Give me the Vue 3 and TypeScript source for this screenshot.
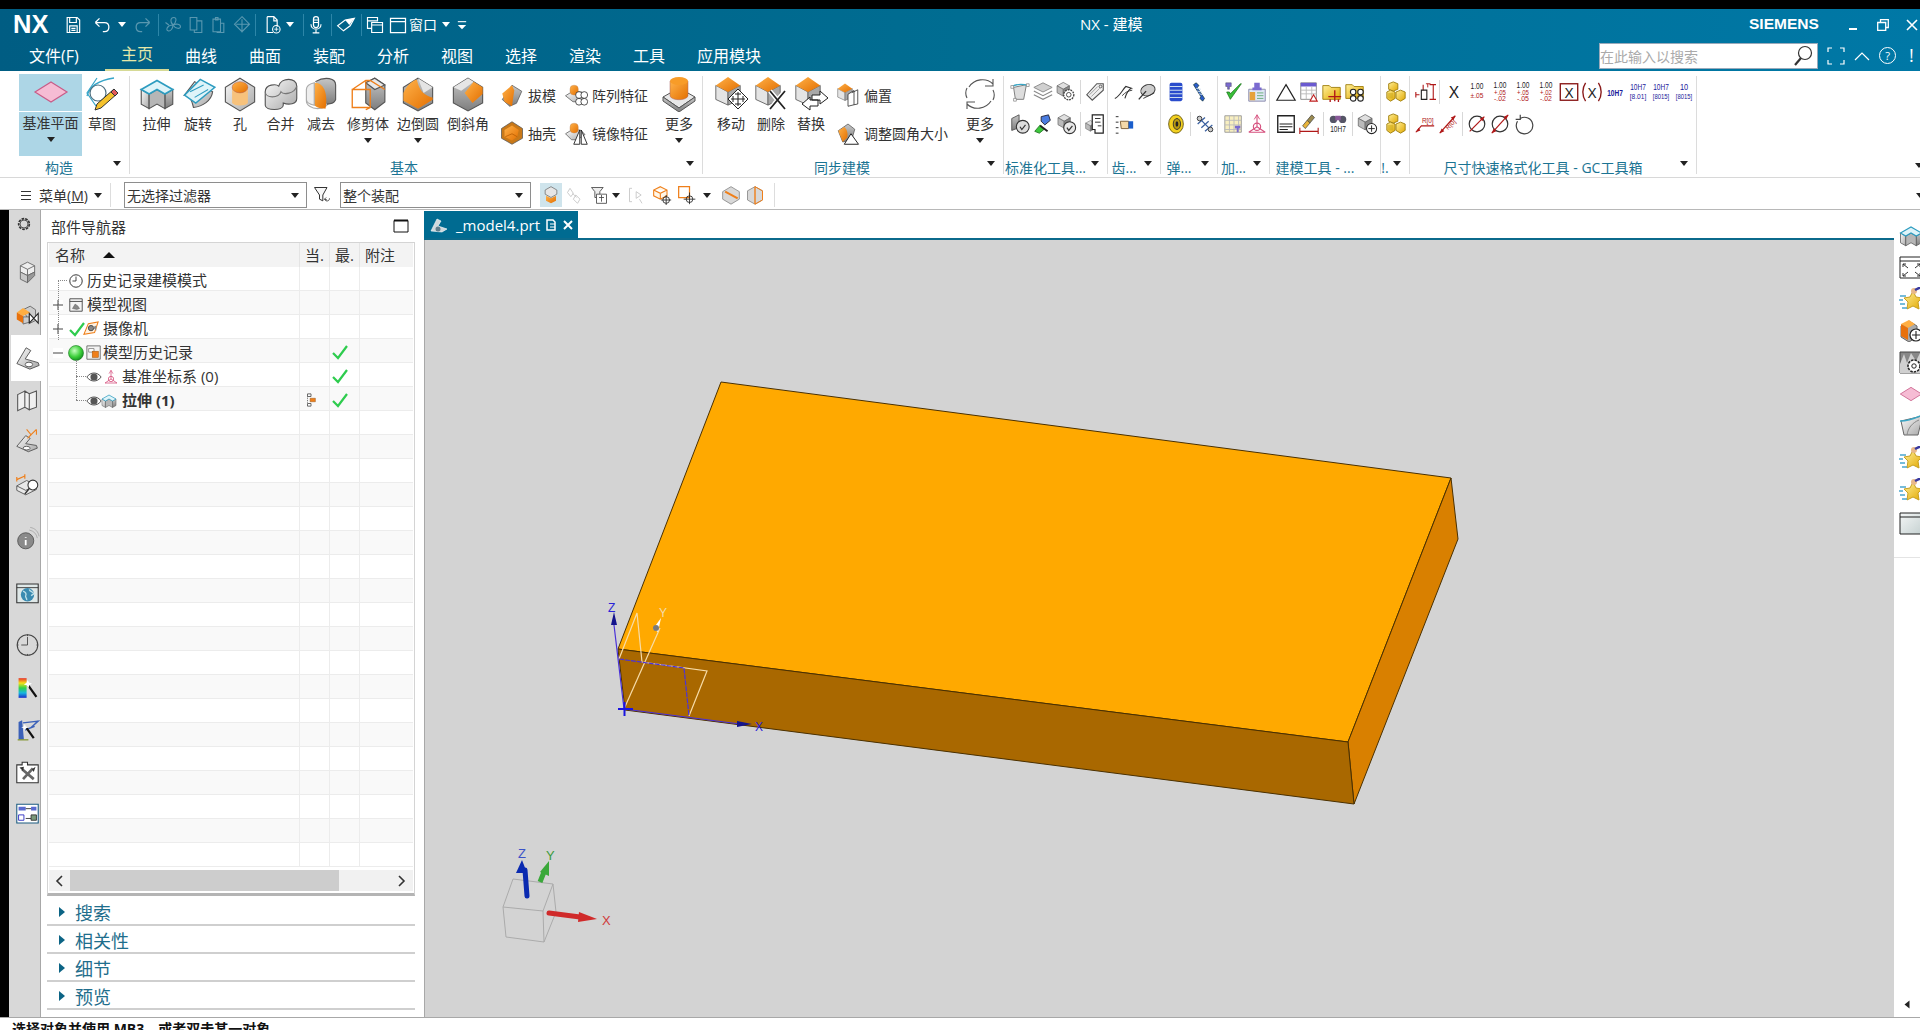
<script setup lang="ts">
interface Item { i?: string; x: number; w?: number; faint?: boolean; caret?: boolean; sep?: boolean; active?: boolean; label?: string }

// turns absolute centre positions into left margins for a flex row
function place(items: Item[], start: number) {
  let end = start;
  return items.map((it) => {
    const w = it.w ?? 22;
    const m = it.x - w / 2 - end;
    end = it.x + w / 2;
    return { ...it, style: { marginLeft: m + 'px', width: w + 'px' } };
  });
}

const qat = place([
  { i: 'save', x: 73 }, { i: 'undo', x: 102 }, { caret: true, x: 122, w: 8 }, { i: 'redo', x: 143, faint: true },
  { sep: true, x: 158, w: 1 }, { i: 'fan', x: 173, faint: true }, { i: 'copy', x: 196, faint: true }, { i: 'paste', x: 218, faint: true },
  { i: 'cross', x: 242, faint: true }, { sep: true, x: 255, w: 1 }, { i: 'newfile', x: 273 }, { caret: true, x: 290, w: 8 },
  { sep: true, x: 303, w: 1 }, { i: 'mic', x: 316 }, { sep: true, x: 331, w: 1 }, { i: 'eraser', x: 346 }, { sep: true, x: 361, w: 1 },
  { i: 'cascade', x: 375 }, { i: 'window', x: 398 }, { label: '窗口', x: 423, w: 28 }, { caret: true, x: 446, w: 8 }, { i: 'more', x: 462, w: 12 }
], 48);

const menus = ['曲线', '曲面', '装配', '分析', '视图', '选择', '渲染', '工具', '应用模块'];

const basicBtns = [
  { i: 'extrude', t: '拉伸', w: 41 }, { i: 'revolve', t: '旋转', w: 42 }, { i: 'hole', t: '孔', w: 42 }, { i: 'unite', t: '合并', w: 39 },
  { i: 'subtract', t: '减去', w: 42 }, { i: 'trim', t: '修剪体', w: 52, caret: true }, { i: 'blend', t: '边倒圆', w: 48, caret: true }, { i: 'chamfer', t: '倒斜角', w: 52 }
];
const syncBtns = [{ i: 'move', t: '移动', w: 40 }, { i: 'del', t: '删除', w: 40 }, { i: 'replace', t: '替换', w: 40 }];

const small: { name: string; w: number; pad: number; cap: string; rows: string[][] }[] = [
  { name: 'std', w: 104, pad: 4, cap: '标准化工具...', rows: [['fitframe', 'layers', 'gearcube', '|', 'tag'], ['wheelcheck', 'bluegreen', 'cubecheck', '|', 'docs']] },
  { name: 'gear', w: 53, pad: 4, cap: '齿...', rows: [['pena', 'penb'], ['handflag']] },
  { name: 'spring', w: 57, pad: 3, cap: '弹...', rows: [['coil', 'spring'], ['ycoil', '|', 'bspring']] },
  { name: 'add', w: 52, pad: 4, cap: '加...', rows: [['vcheck', 'docblue'], ['grid', 'datum']] },
  { name: 'tool', w: 111, pad: 4, cap: '建模工具 - ...', rows: [['tri', 'table', 'folderplus', 'folderlink'], ['doclines', 'brush', '|', 'bino', '|', 'cubeplus']] },
  { name: 'bang', w: 29, pad: 3, cap: '!.', rows: [['cubes'], ['cubes']] },
  { name: 'dim', w: 287, pad: 3, cap: '尺寸快速格式化工具 - GC工具箱', rows: [
    ['dimst', '|', 'xmark', 't1', 't2', 't3', 't4', 'boxx', 'parenx', 'h1', 'h2', 'h3', 'h4'],
    ['rdim', 'slant', '|', 'dia1', 'dia2', 'rot']] }
];

// toolbar icons that carry real text
interface Line { t: string; y: number; size: number; fill: string; len?: number; x?: number; bold?: boolean; rot?: string }
const RED = '#b01818';
const NAVY = '#1a1a9a';
const tol = (a: string, b?: string): Line[] => b
  ? [{ t: '1.00', y: 8, size: 9, fill: '#222', len: 14 }, { t: a, y: 15, size: 7.5, fill: RED, len: 13 }, { t: b, y: 22, size: 7.5, fill: RED, len: 13 }]
  : [{ t: '1.00', y: 9, size: 9, fill: '#222', len: 14 }, { t: a, y: 18, size: 8, fill: RED, len: 14 }];
const fit = (top: string, bot: string): Line[] => [
  { t: top, y: 10, size: 10, fill: NAVY, len: top.length > 2 ? 17 : 9 },
  { t: bot, y: 20, size: 8, fill: NAVY, len: 18 }
];
const textIcons: Record<string, { base?: string; lines: Line[] }> = {
  xmark: { lines: [{ t: 'X', y: 18, size: 17, fill: '#222' }] },
  t1: { lines: tol('±.05') },
  t2: { lines: tol('+.05', '-.02') },
  t3: { lines: tol('+.05', '-.05') },
  t4: { lines: tol('+.02', '-.02') },
  boxx: { base: 'boxS', lines: [{ t: 'X', y: 18, size: 15, fill: '#222' }] },
  parenx: { base: 'parenS', lines: [{ t: 'X', y: 18, size: 15, fill: '#222' }] },
  h1: { lines: [{ t: '10H7', y: 16, size: 10, fill: NAVY, len: 17, bold: true }] },
  h2: { lines: fit('10H7', '[8.01]') },
  h3: { lines: fit('10H7', '[8015]') },
  h4: { lines: fit('10', '[8015]') },
  bino: { base: 'binoS', lines: [{ t: '10H7', y: 21, size: 9, fill: '#222', len: 17 }] },
  rdim: { base: 'rdimS', lines: [{ t: 'R[0]', y: 11, size: 7, fill: RED, x: 15 }] },
  slant: { base: 'slantS', lines: [{ t: 'R[0]', y: 15, size: 7, fill: RED, x: 15, rot: 'rotate(-45 15 13)' }] }
};

const quick = place([
  { i: 'funnel', x: 322, w: 20 }
], 307);
const quick2 = place([
  { i: 'selcube', x: 551, w: 22, active: true }, { i: 'chain', x: 575, faint: true }, { i: 'filt', x: 599, w: 20 }, { caret: true, x: 616, w: 8 },
  { i: 'brk', x: 637, faint: true }, { i: 'cubetarget', x: 662 }, { i: 'sqtarget', x: 687 }, { caret: true, x: 707, w: 8 },
  { i: 'slice', x: 731 }, { i: 'halfcube', x: 755 }, { sep: true, x: 774, w: 1 }
], 531);

const sideIcons: { i: string; y: number; s?: number }[] = [
  { i: 'gear', y: 224, s: 16 }, { i: 'asm', y: 272 }, { i: 'constraint', y: 316 }, { i: 'partnav', y: 358 }, { i: 'book', y: 400 },
  { i: 'role', y: 441 }, { i: 'dimfind', y: 485 }, { i: 'info', y: 539 }, { i: 'web', y: 593 }, { i: 'clock', y: 645 },
  { i: 'wand', y: 688 }, { i: 'bwand', y: 730 }, { i: 'tools', y: 772 }, { i: 'layout', y: 814 }
];
const SIDE_TOP = 210;
const sideStyled = sideIcons.map((s, k) => {
  const size = 28;
  const prevEnd = k === 0 ? SIDE_TOP : sideIcons[k - 1].y + size / 2;
  return { ...s, style: { marginTop: s.y - size / 2 - prevEnd + 'px' } };
});

const rightIcons = [
  { i: 'extrude', y: 236 }, { i: 'fit', y: 267 }, { i: 'star', y: 299 }, { i: 'cubeadd', y: 330 }, { i: 'scene', y: 362 },
  { i: 'plane', y: 394 }, { i: 'surface', y: 426 }, { i: 'star', y: 458 }, { i: 'star', y: 490 }, { i: 'blankwin', y: 523 }
];
const rightStyled = rightIcons.map((s, k) => ({
  ...s,
  style: { marginTop: s.y - 12 - (k === 0 ? 210 : rightIcons[k - 1].y + 12) + 'px' }
}));

interface Row { icons: Item[]; tx: number; t: string; bold?: boolean; cur?: boolean; ok?: boolean }
const rows: Row[] = [
  { icons: [{ i: 'clockS', x: 76, w: 18 }], tx: 87, t: '历史记录建模模式' },
  { icons: [{ i: 'plus', x: 58, w: 10 }, { i: 'viewS', x: 76, w: 18 }], tx: 87, t: '模型视图' },
  { icons: [{ i: 'plus', x: 58, w: 10 }, { i: 'check', x: 77, w: 16 }, { i: 'camera', x: 91, w: 16 }], tx: 103, t: '摄像机' },
  { icons: [{ i: 'minus', x: 58, w: 10 }, { i: 'ball', x: 76, w: 16 }, { i: 'hist', x: 94, w: 16 }], tx: 103, t: '模型历史记录', ok: true },
  { icons: [{ i: 'eye', x: 94, w: 16 }, { i: 'datum', x: 111, w: 18 }], tx: 122, t: '基准坐标系 (0)', ok: true },
  { icons: [{ i: 'eye', x: 94, w: 16 }, { i: 'extrude', x: 109, w: 16 }], tx: 122, t: '拉伸 (1)', bold: true, cur: true, ok: true }
];
const treeRows = Array.from({ length: 25 }, (_, k) => {
  const r = rows[k];
  if (!r) return { key: k, cells: [], tm: 0, t: '', bold: false, cur: false, ok: false };
  const cells = place(r.icons, 49);
  const last = r.icons[r.icons.length - 1];
  return { key: k, cells, tm: r.tx - (last.x + (last.w ?? 22) / 2), t: r.t, bold: !!r.bold, cur: !!r.cur, ok: !!r.ok };
});

const sections = ['搜索', '相关性', '细节', '预览'];
</script>

<template>
  <div class="app">
    <!-- icon sheet -->
    <svg class="sheet" width="0" height="0" aria-hidden="true">
      <defs>
        <linearGradient id="gs" x1="0" y1="0" x2="1" y2="1"><stop offset="0" stop-color="#fafafa" /><stop offset="1" stop-color="#a8a8a8" /></linearGradient>
        <linearGradient id="gd" x1="0" y1="0" x2="0" y2="1"><stop offset="0" stop-color="#c6c6c6" /><stop offset="1" stop-color="#7e7e7e" /></linearGradient>
        <linearGradient id="go" x1="0" y1="0" x2="1" y2="1"><stop offset="0" stop-color="#ffb24a" /><stop offset="1" stop-color="#e36f00" /></linearGradient>
        <linearGradient id="gy" x1="0" y1="0" x2="1" y2="1"><stop offset="0" stop-color="#fff09a" /><stop offset="1" stop-color="#e2a800" /></linearGradient>
        <linearGradient id="gr" x1="0" y1="0" x2="0" y2="1"><stop offset="0" stop-color="#e8322a" /><stop offset=".25" stop-color="#f5e21c" /><stop offset=".5" stop-color="#2fd24a" /><stop offset=".75" stop-color="#18b8e0" /><stop offset="1" stop-color="#1a2ccc" /></linearGradient>
        <radialGradient id="gb" cx=".4" cy=".35" r=".7"><stop offset="0" stop-color="#c6ffc0" /><stop offset=".6" stop-color="#3ccf3a" /><stop offset="1" stop-color="#128a20" /></radialGradient>
        <linearGradient id="gw" x1="0" y1="0" x2="1" y2="1"><stop offset="0" stop-color="#f4f6f6" /><stop offset="1" stop-color="#c4d0d0" /></linearGradient>
      </defs>

      <!-- quick access -->
      <symbol id="save" viewBox="0 0 24 24"><path d="M5 3h12l3 3v15H5zM8 3v6h8V3M8 21v-8h9v8M10 16h5M10 18.500h5" fill="none" stroke="currentColor" stroke-width="1.400" /></symbol>
      <symbol id="undo" viewBox="0 0 24 24"><path d="M4 9l5-5M4 9l5 5M4 9h11c7 0 7 11 0 11h-2" fill="none" stroke="currentColor" stroke-width="1.500" /></symbol>
      <symbol id="redo" viewBox="0 0 24 24"><path d="M20 9l-5-5M20 9l-5 5M20 9H9c-7 0-7 11 0 11h2" fill="none" stroke="currentColor" stroke-width="1.500" /></symbol>
      <symbol id="fan" viewBox="0 0 24 24"><path d="M12 12C8 8 9 3 13 3s3 6-1 9zm0 0c4-2 9-1 9 2s-6 3-9-2zm0 0c0 4-3 8-6 7s-1-7 6-7zM3 9l4 3" fill="none" stroke="currentColor" stroke-width="1.300" /></symbol>
      <symbol id="copy" viewBox="0 0 24 24"><path d="M5 3h8v15H5zM13 7h6v14h-9v-3" fill="none" stroke="currentColor" stroke-width="1.300" /></symbol>
      <symbol id="paste" viewBox="0 0 24 24"><path d="M6 5h9v15H6zM9 3h3v3H9zM15 10h4v11h-8v-1" fill="none" stroke="currentColor" stroke-width="1.300" /></symbol>
      <symbol id="cross" viewBox="0 0 24 24"><path d="M12 2l9 9-9 9-9-9zM12 5v16M5 11h16" fill="none" stroke="currentColor" stroke-width="1.300" /></symbol>
      <symbol id="newfile" viewBox="0 0 24 24"><path d="M5 2h8l4 4v8M13 2v5h4M5 2v19h7" fill="none" stroke="currentColor" stroke-width="1.400" /><circle cx="16" cy="17" r="4.500" fill="none" stroke="currentColor" stroke-width="1.300" /><path d="M16 14.500v5M13.500 17h5" stroke="currentColor" /></symbol>
      <symbol id="mic" viewBox="0 0 24 24"><rect x="9" y="2" width="6" height="13" rx="3" fill="none" stroke="currentColor" stroke-width="1.500" /><path d="M6 11c0 8 12 8 12 0M12 18v3M8 21.500h8M9.500 6h5M9.500 9h5" fill="none" stroke="currentColor" stroke-width="1.400" /></symbol>
      <symbol id="eraser" viewBox="0 0 24 24"><path d="M2 13l9-7 11-2-5 9-8 6z" fill="none" stroke="currentColor" stroke-width="1.400" /><path d="M11 6l5 6 6-8z" fill="currentColor" /></symbol>
      <symbol id="cascade" viewBox="0 0 24 24"><path d="M3 3h12v4H3zM3 7v9h5M8 9h13v12H8zM8 12h13" fill="none" stroke="currentColor" stroke-width="1.400" /></symbol>
      <symbol id="window" viewBox="0 0 24 24"><path d="M3 4h18v17H3zM3 8h18" fill="none" stroke="currentColor" stroke-width="1.500" /></symbol>
      <symbol id="more" viewBox="0 0 12 24"><path d="M1 8h10" stroke="currentColor" stroke-width="1.300" /><path d="M1 12h10l-5 5z" fill="currentColor" /></symbol>

      <!-- ribbon large -->
      <symbol id="plane" viewBox="0 0 36 24"><path d="M18 2l16 10-16 10L2 12z" fill="#f6bcd4" stroke="#c85c88" stroke-width="1.200" /></symbol>
      <symbol id="sketch" viewBox="0 0 36 36"><path d="M3 20C6 9 16 4 30 2" fill="none" stroke="#37a5c8" stroke-width="1.300" /><path d="M13 2L3 17l9 13" fill="none" stroke="#37a5c8" stroke-width="1.200" /><circle cx="14" cy="17" r="8" fill="none" stroke="#4d6f80" stroke-width="1.200" /><path d="M30 13l4 4-17 15-6 2 2-6z" fill="#f5c22c" stroke="#333" /><path d="M30 13l4 4-3 3-4-4z" fill="#e25a5a" stroke="#333" /></symbol>
      <symbol id="extrude" viewBox="0 0 32 32"><path d="M2 12l7 4v13l-7-4z" fill="url(#gs)" stroke="#555" /><path d="M30 12l-7 4v13l7-4z" fill="url(#gd)" stroke="#555" /><path d="M9 16l7-4 7 4v13l-7-4-7 4z" fill="#b6b6b6" stroke="#555" /><path d="M2 12L16 4l14 8-7 4-7-4-7 4z" fill="#dff4f9" stroke="#2d9cc0" stroke-width="1.500" /></symbol>
      <symbol id="revolve" viewBox="0 0 32 32"><path d="M4 17c4-1 6 3 8 11 8-1 16-6 17-14L13 5z" fill="url(#gs)" stroke="#555" /><path d="M4 17L18 3l13 7-17 14z" fill="#dff4f9" stroke="#2d9cc0" stroke-width="1.300" /><path d="M9 14l12-6M13 19l12-7" stroke="#2d9cc0" fill="none" /></symbol>
      <symbol id="hole" viewBox="0 0 32 32"><path d="M16 2l13 8v13l-13 8-13-8V10z" fill="url(#gs)" stroke="#555" /><path d="M9 11v13c2 3 12 3 14 0V11" fill="#f7c27c" /><ellipse cx="16" cy="10" rx="7" ry="5" fill="url(#go)" stroke="#a55" stroke-width=".4" /></symbol>
      <symbol id="unite" viewBox="0 0 32 32"><path d="M2 14c0-7 10-7 12-5 2-8 16-8 16 0v11c0 5-7 6-12 4v2c0 5-16 5-16 0z" fill="url(#gs)" stroke="#555" /><path d="M2 14c0 6 12 6 14 0 2 3 12 2 14-5" fill="none" stroke="#777" /></symbol>
      <symbol id="subtract" viewBox="0 0 32 32"><ellipse cx="13" cy="22" rx="10" ry="7" fill="#fff" stroke="#aaa" /><path d="M11 5c9-5 18-3 18 3v13c-1 3-4 4-8 4" fill="url(#gd)" stroke="#555" /><path d="M10 6c10 0 12 12 10 23-2 0-7 0-10-3z" fill="url(#go)" /><path d="M3 12c0-3 3-5 7-6v20c-4-1-7-3-7-5z" fill="#eee" stroke="#aaa" /></symbol>
      <symbol id="trim" viewBox="0 0 32 32"><path d="M14 6l8-4 9 6v15l-9 7-8-6z" fill="url(#gd)" stroke="#555" /><path d="M14 6l8 6 9-4-9-6z" fill="#e8e8e8" stroke="#555" /><path d="M2 12h16v16H2zM2 12l12-8h4l13 8M18 12v16l-4 2" fill="none" stroke="#ef7f1a" stroke-width="1.200" /><path d="M14 4v8" stroke="#ef7f1a" /></symbol>
      <symbol id="blend" viewBox="0 0 32 32"><path d="M16 2l13 8v14l-13 7-13-7V10z" fill="url(#gd)" stroke="#555" /><path d="M16 2l13 8-8 5z" fill="#e4e4e4" /><path d="M3 15C6 8 11 4 15 3c1 5 3 10 7 13 3 2 5 3 7 3v2l-13 8-13-7z" fill="url(#go)" /></symbol>
      <symbol id="chamfer" viewBox="0 0 32 32"><path d="M16 2l13 8v14l-13 7-13-7V10z" fill="url(#gd)" stroke="#555" /><path d="M3 10L16 2l5 3-11 8z" fill="#e6e6e6" /><path d="M21 5l8 5v6l-9 8-7-9z" fill="url(#go)" /></symbol>
      <symbol id="draft" viewBox="0 0 32 32"><path d="M16 3l13 8-7 16-9 4-10-9z" fill="url(#gd)" stroke="#555" /><path d="M3 14L16 3l3 7-3 21-10-6z" fill="url(#go)" /></symbol>
      <symbol id="pattern" viewBox="0 0 32 32"><path d="M2 17l8-5 14 0 6 6-10 7H12z" fill="url(#gs)" stroke="#555" /><rect x="8" y="3" width="11" height="13" rx="5" fill="url(#go)" stroke="#b86" stroke-width=".5" /><g fill="#fff" stroke="#222"><circle cx="20" cy="16" r="4.500" /><circle cx="27" cy="16" r="4.500" /><circle cx="20" cy="25" r="4.500" /><circle cx="27" cy="25" r="4.500" /></g></symbol>
      <symbol id="shell" viewBox="0 0 32 32"><path d="M16 1l14 9v13l-14 8-14-8V10z" fill="#c87818" stroke="#555" /><path d="M16 6l9 6-2 9-7 5-10-5V12z" fill="url(#go)" /><path d="M7 21l9-4 7 4" fill="none" stroke="#b55a00" /></symbol>
      <symbol id="mirror" viewBox="0 0 32 32"><path d="M2 17l8-5 12 0 6 6-10 7H10z" fill="url(#gs)" stroke="#555" /><rect x="8" y="3" width="11" height="13" rx="5" fill="url(#go)" stroke="#b86" stroke-width=".5" /><path d="M21 12v19h-8zM23 12v19h8z" fill="#fff" stroke="#222" stroke-width="1.200" /></symbol>
      <symbol id="more1" viewBox="0 0 36 36"><path d="M2 21l16-9 16 9-16 11z" fill="#e8e8e8" stroke="#555" /><path d="M2 21v4l16 11 16-11v-4L18 32z" fill="url(#gd)" stroke="#555" /><path d="M9 5v15c2 5 16 5 18 0V5z" fill="url(#go)" stroke="#a66" stroke-width=".5" /><ellipse cx="18" cy="5" rx="9" ry="4" fill="#f89c28" /></symbol>
      <symbol id="oc" viewBox="0 0 32 32"><path d="M3 10v15l13 6V17z" fill="#e4e4e4" stroke="#666" /><path d="M29 10v15l-13 6V17z" fill="#a8a8a8" stroke="#666" /><path d="M16 1l13 9-13 7-13-7z" fill="url(#go)" /></symbol>
      <symbol id="move" viewBox="0 0 36 36"><use href="#oc" width="30" height="30" /><path d="M25 13l10 10-10 10-10-10z" fill="#fff" stroke="#222" /><path d="M25 16v14M18 23h14M22 18h6M22 28h6M20 20v6M30 20v6" stroke="#222" fill="none" /></symbol>
      <symbol id="del" viewBox="0 0 36 36"><use href="#oc" width="30" height="30" /><path d="M17 15l15 18M32 15L17 33" stroke="#fff" stroke-width="4.500" /><path d="M17 15l15 18M32 15L17 33" stroke="#222" stroke-width="1.800" /></symbol>
      <symbol id="replace" viewBox="0 0 36 36"><use href="#oc" width="30" height="30" /><path d="M19 19h8v-4l8 7-8 6v-4h-8zM25 24h-8v-3l-8 7 8 6v-4h8z" fill="#fff" stroke="#222" /></symbol>
      <symbol id="offset" viewBox="0 0 32 32"><use href="#oc" width="24" height="24" /><path d="M16 15l8-5v19l-8 2zM21 13l8-4v19l-5 1" fill="#fff" stroke="#222" /></symbol>
      <symbol id="resize" viewBox="0 0 32 32"><path d="M3 13l13-9 9 7-4 14-12 3z" fill="url(#gd)" stroke="#555" /><path d="M3 13l8-5c4 3 5 9 4 14l-6 6z" fill="url(#go)" /><path d="M20 17l10 14H11z" fill="#fff" stroke="#222" stroke-width="1.300" /></symbol>
      <symbol id="rotate" viewBox="0 0 36 36"><path d="M7 11C12 3 24 1 31 8M31 3v7h-8M29 25C24 33 12 35 5 28M5 33v-7h8M31 14c2 4 1 8 0 10M5 22c-2-4-1-8 0-10" fill="none" stroke="#555" stroke-width="1.100" /></symbol>

      <!-- small -->
      <symbol id="fitframe" viewBox="0 0 24 24"><path d="M5 7l14-3-3 16H7z" fill="#ddd" stroke="#777" /><path d="M3 6c6-3 12-3 18-1" fill="none" stroke="#3aa6c6" stroke-width="1.400" /><path d="M2 5h3v3H2zM19 3h3v3h-3zM5 19h3v3H5z" fill="#fff" stroke="#777" stroke-width=".7" /></symbol>
      <symbol id="layers" viewBox="0 0 24 24"><path d="M12 2l10 5-10 5L2 7z" fill="#d0d0d0" stroke="#888" /><path d="M2 11l10 5 10-5M2 15l10 5 10-5" fill="none" stroke="#888" stroke-width="1.300" /></symbol>
      <symbol id="gcube" viewBox="0 0 24 24"><path d="M12 2l9 5-9 5-9-5z" fill="#e0e0e0" stroke="#666" /><path d="M3 7v10l9 5V12z" fill="#bbb" stroke="#666" /><path d="M21 7v10l-9 5V12z" fill="#888" stroke="#666" /></symbol>
      <symbol id="gearcube" viewBox="0 0 24 24"><use href="#gcube" width="18" height="18" /><circle cx="15" cy="15" r="5.500" fill="#fff" stroke="#444" stroke-width="1.500" stroke-dasharray="2 1" /><circle cx="15" cy="15" r="2.500" fill="none" stroke="#444" /></symbol>
      <symbol id="tag" viewBox="0 0 24 24"><path d="M3 15L14 3h7v7L9 21z" fill="#f0f0f0" stroke="#555" stroke-width="1.200" /><path d="M6 15l9-9M8 17l9-9" stroke="#999" fill="none" /><circle cx="18" cy="6" r="1.500" fill="none" stroke="#555" /></symbol>
      <symbol id="wheelcheck" viewBox="0 0 24 24"><path d="M3 6l8-4v14l-8 3z" fill="url(#gd)" stroke="#555" /><circle cx="15" cy="15" r="7" fill="#ddd" stroke="#333" stroke-width="1.200" /><path d="M12 15l2 3 4-5" fill="none" stroke="#333" stroke-width="1.300" /></symbol>
      <symbol id="bluegreen" viewBox="0 0 24 24"><path d="M3 20l6-7 4 5-5 4z" fill="#3cc83c" stroke="#2a7a2a" /><path d="M10 4l8-2 2 6-6 5-4-4z" fill="#4a7ce0" stroke="#223" /><path d="M9 14l8 6" stroke="#222" stroke-width="2" /></symbol>
      <symbol id="cubecheck" viewBox="0 0 24 24"><use href="#gcube" width="18" height="18" x="1" /><circle cx="16" cy="16" r="6.500" fill="#e8e8e8" stroke="#333" stroke-width="1.200" /><path d="M13 16l2 3 4-5" fill="none" stroke="#333" stroke-width="1.300" /></symbol>
      <symbol id="docs" viewBox="0 0 24 24"><use href="#gcube" width="14" height="16" y="6" /><path d="M9 2h12v20H12V18H9z" fill="#fff" stroke="#222" stroke-width="1.300" /><path d="M12 6h6M12 10h6M15 14h4" stroke="#222" /></symbol>
      <symbol id="pena" viewBox="0 0 24 24"><path d="M2 19c5-2 8-9 12-13l6 2c-3 1-6 7-7 11" fill="none" stroke="#333" stroke-width="1.200" /><path d="M10 16c4-4 6-5 11-6" fill="none" stroke="#333" /></symbol>
      <symbol id="penb" viewBox="0 0 24 24"><ellipse cx="13" cy="10" rx="8" ry="6" fill="#ccc" stroke="#333" transform="rotate(-20 13 10)" /><path d="M3 20l8-9" stroke="#333" stroke-width="1.500" /><path d="M8 19l12-6" stroke="#333" /></symbol>
      <symbol id="handflag" viewBox="0 0 24 24"><path d="M3 4h3M3 10h3M3 16h3M3 22h3" stroke="#222" /><path d="M8 9h9v8H9z" fill="#f4d8a8" stroke="#7a5a30" /><rect x="17" y="9" width="5" height="8" fill="#1a5ecc" /></symbol>
      <symbol id="coil" viewBox="0 0 24 24"><rect x="5" y="2" width="14" height="20" rx="2" fill="#2a4ccc" /><path d="M5 6h14M5 10h14M5 14h14M5 18h14" stroke="#cde" stroke-width="1.100" /></symbol>
      <symbol id="spring" viewBox="0 0 24 24"><path d="M6 4l3-2 3 3-2 2 8 12-2 3-3-3 1-2z" fill="#2a5ccc" stroke="#133" stroke-width=".8" /><path d="M9 8l5 1M10 11l5 1M12 14l5 1" stroke="#cde" /></symbol>
      <symbol id="ycoil" viewBox="0 0 24 24"><ellipse cx="12" cy="12" rx="8" ry="10" fill="#f2d020" stroke="#6a5a10" /><ellipse cx="13" cy="12" rx="4" ry="6" fill="#b89a10" stroke="#333" /><ellipse cx="13" cy="12" rx="1.500" ry="3" fill="#222" /></symbol>
      <symbol id="bspring" viewBox="0 0 24 24"><path d="M4 4l16 16M4 12l8-7M8 16l8-7M12 20l8-7" stroke="#3a60a0" stroke-width="1.400" fill="none" /><circle cx="6" cy="6" r="2.500" fill="#ccc" stroke="#333" /><circle cx="18" cy="18" r="2.500" fill="#ccc" stroke="#333" /></symbol>
      <symbol id="vcheck" viewBox="0 0 24 24"><path d="M3 2h6v4H7v3H5V6H3z" fill="#7a6ad0" stroke="#445" stroke-width=".5" /><path d="M4 12l4 8L20 3l-1 0-11 11-1-2z" fill="#38c038" stroke="#1a701a" stroke-width=".8" /></symbol>
      <symbol id="docblue" viewBox="0 0 24 24"><path d="M3 9h18v13H3z" fill="#dfe8f5" stroke="#88a" /><path d="M9 2h6v5h2v3H7V7h2z" fill="#7a6ad0" /><path d="M12 13h7M12 16h7M12 19h7" stroke="#6a7" /><rect x="4" y="12" width="6" height="9" fill="#e6a23c" /></symbol>
      <symbol id="grid" viewBox="0 0 24 24"><path d="M2 3h18v18H2z" fill="#f8efc0" stroke="#999" /><path d="M2 8h18M2 13h18M2 18h18M7 3v18M12 3v18M17 3v18" stroke="#bbb" /><path d="M13 14h6v3h-2v4h-2v-4h-2z" fill="#7a6ad0" /></symbol>
      <symbol id="datum" viewBox="0 0 24 24"><circle cx="12" cy="15" r="4" fill="none" stroke="#d6507e" stroke-width="1.200" /><path d="M12 2v13M12 15L3 21M12 15l9 6M3 21h18" fill="none" stroke="#d6507e" stroke-width="1.200" /><path d="M9 7l3-5 3 5" fill="none" stroke="#d6507e" /></symbol>
      <symbol id="tri" viewBox="0 0 24 24"><path d="M12 4l10 17H2z" fill="#fff" stroke="#222" stroke-width="1.300" /></symbol>
      <symbol id="table" viewBox="0 0 24 24"><path d="M3 2h17v18H3z" fill="#fff" stroke="#888" /><path d="M3 2h17v4H3z" fill="#6a5ad0" /><path d="M3 10h17M3 14h17M9 6v14M15 6v14" stroke="#bbb" /><path d="M13 22l4-7 4 7z" fill="#fff" stroke="#c02020" stroke-width="1.200" /></symbol>
      <symbol id="folderplus" viewBox="0 0 24 24"><path d="M2 5h7l2 2h10v13H2z" fill="url(#gy)" stroke="#a08010" /><path d="M8 17h14M15 10v12M10 20v3M19 20v3" stroke="#b01818" stroke-width="1.500" /></symbol>
      <symbol id="folderlink" viewBox="0 0 24 24"><path d="M2 4h7l2 2h10v13H2z" fill="url(#gy)" stroke="#a08010" /><g fill="#fff" stroke="#222" stroke-width="1.200"><circle cx="10" cy="12" r="3" /><circle cx="18" cy="12" r="3" /><circle cx="10" cy="19" r="3" /><circle cx="18" cy="19" r="3" /></g></symbol>
      <symbol id="doclines" viewBox="0 0 24 24"><path d="M3 3h18v18H3z" fill="#fff" stroke="#222" stroke-width="1.500" /><path d="M5 12h14M5 15h14M5 18h9" stroke="#222" stroke-width="1.200" /></symbol>
      <symbol id="brush" viewBox="0 0 24 24"><path d="M2 16v7M22 16v7M2 20h20" stroke="#b01818" stroke-width="1.200" /><path d="M15 2l3 3-5 6-3-3z" fill="#9a8a50" stroke="#333" stroke-width=".7" /><path d="M5 14l5-6 3 3-5 6z" fill="#e8b43c" stroke="#333" stroke-width=".7" /></symbol>
      <symbol id="binoS" viewBox="0 0 24 24"><circle cx="7" cy="7" r="4" fill="#556" /><circle cx="17" cy="7" r="4" fill="#556" /><rect x="9" y="3" width="6" height="5" fill="#8a5a9a" /></symbol>
      <symbol id="cubeplus" viewBox="0 0 24 24"><use href="#gcube" width="20" height="20" /><circle cx="17" cy="17" r="5.500" fill="#fff" stroke="#222" stroke-width="1.100" /><path d="M17 13.500v7M13.500 17h7" stroke="#222" /></symbol>
      <symbol id="cubes" viewBox="0 0 24 24"><path d="M9 1l5 2v6l-5 2-5-2V3z" fill="url(#gy)" stroke="#a08010" /><path d="M6 10l5 2v7l-5 3-4-3v-7z" fill="url(#gy)" stroke="#a08010" /><path d="M17 10l5 2v7l-5 3-5-3v-7z" fill="url(#gy)" stroke="#a08010" /><path d="M3 13h6v6H3z" fill="#caa510" opacity=".5" /></symbol>
      <symbol id="dimst" viewBox="0 0 24 24"><path d="M2 12v6M2 15h4M10 4v6M21 4v16M17 4h8M17 20h8" stroke="#b01818" stroke-width="1.200" /><path d="M8 10h6v10H8z" fill="none" stroke="#222" stroke-width="1.200" /><path d="M13 3h5M15 3v4" stroke="#b01818" /></symbol>
      <symbol id="boxS" viewBox="0 0 24 24"><rect x="2.500" y="3" width="19" height="18" fill="none" stroke="#8a1a1a" stroke-width="1.500" /></symbol>
      <symbol id="parenS" viewBox="0 0 24 24"><path d="M5 2C1 8 1 16 5 22M19 2c4 6 4 14 0 20" fill="none" stroke="#8a1a1a" stroke-width="1.500" /></symbol>
      <symbol id="rdimS" viewBox="0 0 24 24"><path d="M2 21L8 14h14" fill="none" stroke="#b01818" stroke-width="1.200" /><path d="M2 21l5-2-2-3z" fill="#b01818" /></symbol>
      <symbol id="slantS" viewBox="0 0 24 24"><path d="M3 22L20 3" stroke="#b01818" stroke-width="1.300" /><path d="M3 22l2-5 3 3zM20 3l-5 2 3 3z" fill="#b01818" /></symbol>
      <symbol id="dia1" viewBox="0 0 24 24"><circle cx="12" cy="12" r="8.500" fill="none" stroke="#333" stroke-width="1.300" /><path d="M4 20L20 4" stroke="#b01818" stroke-width="1.300" /><path d="M20 4l-5 2 3 3z" fill="#b01818" /></symbol>
      <symbol id="dia2" viewBox="0 0 24 24"><circle cx="12" cy="12" r="8.500" fill="none" stroke="#333" stroke-width="1.300" /><path d="M3 22L21 2" stroke="#b01818" stroke-width="1.300" /><path d="M21 2l-5 2 3 3zM3 22l2-5 3 3z" fill="#b01818" /></symbol>
      <symbol id="rot" viewBox="0 0 24 24"><path d="M9 6a9 9 0 1 1-3 3M9 2v5H4" fill="none" stroke="#444" stroke-width="1.300" /></symbol>

      <!-- quick bar -->
      <symbol id="funnel" viewBox="0 0 24 24"><path d="M3 3h15l-5 9v7l-4-2v-5z" fill="#f8f8f8" stroke="#333" stroke-width="1.200" /><path d="M15 17c1 3 6 3 6-1M15 17l2-2M15 17l3 1" fill="none" stroke="#333" /></symbol>
      <symbol id="selcube" viewBox="0 0 24 24"><path d="M12 2l7 4v5l-7 4-7-4V6z" fill="#e6e6e6" stroke="#777" /><path d="M6 13l6 3 6-3v6l-6 3-6-3z" fill="url(#go)" /></symbol>
      <symbol id="chain" viewBox="0 0 24 24"><path d="M6 4l4 6-3 4-4-5zM13 12l5 5-3 5-5-5zM9 10l5 5" fill="none" stroke="#555" /></symbol>
      <symbol id="filt" viewBox="0 0 24 24"><path d="M3 3h14l-4 5v7H7V8z" fill="#eee" stroke="#444" /><path d="M9 11h12v11H9z" fill="#fff" stroke="#444" /><path d="M12 15h6M15 12v8" stroke="#444" /></symbol>
      <symbol id="brk" viewBox="0 0 24 24"><path d="M6 4H3v16h3M11 8l6 4-6 4zM18 22l-3-5" fill="none" stroke="#555" /></symbol>
      <symbol id="cubetarget" viewBox="0 0 24 24"><path d="M10 2l8 4v7l-8 4-8-4V6zM2 6l8 4 8-4M10 10v7" fill="#fff6e8" stroke="#ef7f1a" stroke-width="1.300" /><circle cx="17" cy="18" r="4" fill="none" stroke="#222" /><path d="M17 12v12M11 18h12" stroke="#222" /></symbol>
      <symbol id="sqtarget" viewBox="0 0 24 24"><path d="M2 2h13v13H2z" fill="none" stroke="#ef7f1a" stroke-width="1.500" /><circle cx="15" cy="17" r="4" fill="none" stroke="#222" /><path d="M15 9v14M8 17h14" stroke="#222" /></symbol>
      <symbol id="slice" viewBox="0 0 24 24"><path d="M12 2l10 6v9l-10 6-10-6V8z" fill="#d8d8d8" stroke="#888" /><path d="M5 8l15 8" stroke="#ef7f1a" stroke-width="2.500" /></symbol>
      <symbol id="halfcube" viewBox="0 0 24 24"><path d="M12 2l9 5v11l-9 5-9-5V7z" fill="#d8d8d8" stroke="#888" /><path d="M12 2l9 5v11l-9 5z" fill="none" stroke="#ef7f1a" stroke-width="1.200" /><path d="M12 2v21" stroke="#ef7f1a" /></symbol>

      <!-- side tabs -->
      <symbol id="gear" viewBox="0 0 24 24"><circle cx="12" cy="12" r="8" fill="none" stroke="#333" stroke-width="2.500" stroke-dasharray="4 1.500" /><circle cx="12" cy="12" r="6" fill="#d8d8d8" stroke="#333" stroke-width="1.200" /></symbol>
      <symbol id="asm" viewBox="0 0 28 28"><path d="M14 3l8 4v7l-8 4-8-4V7z" fill="#eee" stroke="#666" /><path d="M6 7l8 4 8-4M14 11v7" fill="none" stroke="#666" /><path d="M6 14l8 4v8l-8-4z" fill="#c8c8c8" stroke="#666" /><path d="M14 18l8-4v4l-8 8z" fill="#999" stroke="#666" /></symbol>
      <symbol id="constraint" viewBox="0 0 28 28"><path d="M9 7l8-4 6 4v12l-6 3z" fill="#ccc" stroke="#666" /><path d="M9 15v8l7-2v-6z" fill="#ccc" stroke="#666" /><path d="M2 10l7-5 8 5-8 4z" fill="#ffae42" /><path d="M2 10l7 4v8l-7-4z" fill="#e8710c" /><path d="M16 11v11l10-11v11z" fill="#fff" stroke="#222" stroke-width="1.200" /></symbol>
      <symbol id="partnav" viewBox="0 0 28 28"><path d="M2 20L12 3l5 3-6 9 14 4 1 3-10 4z" fill="url(#gs)" stroke="#555" /><ellipse cx="15" cy="21" rx="4" ry="2.500" fill="#fff" stroke="#555" /></symbol>
      <symbol id="book" viewBox="0 0 28 28"><path d="M3 8l8-4v18l-8 4zM11 4l5 3v18l-5-3zM16 7l8-3v18l-8 3z" fill="#f0f0f0" stroke="#555" stroke-width="1.200" /></symbol>
      <symbol id="role" viewBox="0 0 28 28"><path d="M2 20L12 8l5 3-5 6 12 2 1 3-10 4z" fill="url(#gs)" stroke="#555" /><ellipse cx="13" cy="22" rx="4" ry="2" fill="#fff" stroke="#555" /><path d="M13 1l5 6 6-6M18 7l-4 4M24 1v6" fill="none" stroke="#ef7f1a" stroke-width="1.200" /></symbol>
      <symbol id="dimfind" viewBox="0 0 28 28"><path d="M2 15l11-6 11 5v5l-12 6-10-5z" fill="#e8e8e8" stroke="#555" /><path d="M2 15l10 5 12-6" fill="none" stroke="#555" /><path d="M2 8l9-4M2 5v5M11 2v5" stroke="#ef7f1a" stroke-width="1.300" fill="none" /><circle cx="20" cy="14" r="5.500" fill="#fff" stroke="#333" stroke-width="1.200" /><path d="M16 18l-5 6" stroke="#333" stroke-width="1.600" /></symbol>
      <symbol id="info" viewBox="0 0 28 28"><path d="M16 4c5 1 8 4 9 9M17 1c6 1 9 5 10 10" fill="none" stroke="#aaa" /><circle cx="12" cy="16" r="9" fill="#8a8a8a" stroke="#555" /><path d="M12 12v1M12 15v6" stroke="#fff" stroke-width="2" /></symbol>
      <symbol id="web" viewBox="0 0 28 28"><path d="M2 4h24v21H2z" fill="#dfe8e8" stroke="#333" stroke-width="1.200" /><path d="M2 8h24" stroke="#333" /><circle cx="14" cy="16" r="7.500" fill="#3a8ab0" /><path d="M9 12c3 1 4 3 3 5s2 3 1 5M16 10c1 3 4 2 5 5l-3 2" fill="none" stroke="#bfe0e8" stroke-width="1.500" /></symbol>
      <symbol id="clock" viewBox="0 0 28 28"><circle cx="14" cy="14" r="11.500" fill="none" stroke="#444" stroke-width="1.200" /><path d="M14 5v9H7M14 2v2M14 24v2M2 14h2M24 14h2" fill="none" stroke="#444" /></symbol>
      <symbol id="wand" viewBox="0 0 28 28"><rect x="4" y="3" width="9" height="22" fill="url(#gr)" /><path d="M14 10l10 14" stroke="#111" stroke-width="2.500" /><path d="M14 5l2 3 3 1-3 2-1 3-2-3-3-1 3-2z" fill="#fff" /></symbol>
      <symbol id="bwand" viewBox="0 0 28 28"><path d="M4 5l4-2 2 22H4z" fill="#3a60b8" /><path d="M9 6l17-2-9 8M11 14l11-4" fill="none" stroke="#3a60b8" stroke-width="1.500" /><path d="M3 25h12" stroke="#8a9a3a" stroke-width="1.500" /><path d="M13 12l8 11" stroke="#111" stroke-width="2.500" /><path d="M11 7l1 3 3 1-3 1-1 3-1-3-3-1 3-1z" fill="#fff" /></symbol>
      <symbol id="tools" viewBox="0 0 28 28"><path d="M2 6h6V3h6v3h12v20H2z" fill="#fff" stroke="#333" stroke-width="1.200" /><path d="M8 11l13 11M20 10L9 22" stroke="#666" stroke-width="3" /><path d="M5 9l5-1-1 5zM23 8l-4 3 2 3z" fill="#333" /></symbol>
      <symbol id="layout" viewBox="0 0 28 28"><path d="M2 3h24v21H2z" fill="#fff" stroke="#1a5a80" stroke-width="1.200" /><path d="M4 6h8v4H4zM18 6h6v4h-6z" fill="#5a6ad0" /><path d="M12 8h6M12 19h6" stroke="#333" /><path d="M4 15h6v6H4z" fill="#fff" stroke="#2a2ac0" /><path d="M18 15h6v6h-6z" fill="#7a9a7a" stroke="#333" /></symbol>

      <!-- right tabs -->
      <symbol id="fit" viewBox="0 0 24 24"><path d="M1 2h23v21H1zM1 6h23" fill="#fff" stroke="#222" /><path d="M4 9l5 4M4 9h3M4 9v3M21 9l-5 4M21 9h-3M21 9v3M4 21l5-4M4 21h3M4 21v-3M21 21l-5-4M21 21h-3M21 21v-3" fill="none" stroke="#333" /></symbol>
      <symbol id="star" viewBox="0 0 24 24"><path d="M14 4l3 6 6 1-4 4 1 7-6-3-6 3 1-7-4-4 6-1z" fill="url(#gy)" stroke="#c8a020" /><path d="M1 9h6M0 13h4M1 17h5M3 21h5" stroke="#4aa6d0" stroke-width="1.300" /><circle cx="15" cy="4" r="3" fill="#e8b88a" /><path d="M16 3l6-3" stroke="#3a3aa0" stroke-width="2.500" /></symbol>
      <symbol id="cubeadd" viewBox="0 0 24 24"><path d="M2 8l8-5 8 5v11l-8 5-8-5z" fill="#aaa" stroke="#666" /><path d="M2 6l8-4 6 4-7 4z" fill="#ffae42" /><path d="M2 6l7 4v12l-7-4z" fill="#e8710c" /><circle cx="17" cy="17" r="6" fill="#fff" stroke="#222" stroke-width="1.200" /><path d="M17 13v8M13 17h8" stroke="#222" stroke-width="1.100" /></symbol>
      <symbol id="scene" viewBox="0 0 24 24"><path d="M1 2h23v21H1z" fill="#888" stroke="#444" /><path d="M1 14l4-10 3 9 4-10 5 8 4-8 3 10v10H1z" fill="#d0d0d0" /><circle cx="15" cy="16" r="6" fill="#fff" stroke="#222" stroke-width="1.600" stroke-dasharray="2.500 1" /><circle cx="15" cy="16" r="2.200" fill="none" stroke="#222" /></symbol>
      <symbol id="surface" viewBox="0 0 24 24"><path d="M2 7c7-2 14-3 21-5v2l-4 17H5z" fill="url(#gs)" stroke="#666" /><path d="M8 21c1-7 5-12 12-15" fill="none" stroke="#888" /><path d="M1 7c7 0 14-2 22-6" fill="none" stroke="#3aa6c6" stroke-width="1.400" /></symbol>
      <symbol id="blankwin" viewBox="0 0 24 24"><path d="M1 2h23v21H1z" fill="url(#gw)" stroke="#222" /><path d="M1 6h23" stroke="#222" /></symbol>

      <!-- tree -->
      <symbol id="clockS" viewBox="0 0 18 18"><circle cx="9" cy="9" r="7" fill="#fff" stroke="#333" stroke-width="1.100" /><path d="M9 4v5H5" fill="none" stroke="#333" /></symbol>
      <symbol id="viewS" viewBox="0 0 18 18"><path d="M2 2h14v14H2z" fill="#f4f4f4" stroke="#444" /><path d="M2 5h14" stroke="#444" /><path d="M5 13l3-5 3 2 2 3-3 1z" fill="#888" stroke="#555" stroke-width=".5" /></symbol>
      <symbol id="plus" viewBox="0 0 10 10"><rect width="10" height="10" fill="#fff" /><path d="M0 5h10M5 0v10" stroke="#444" /></symbol>
      <symbol id="minus" viewBox="0 0 10 10"><rect width="10" height="10" fill="#fff" /><path d="M0 5h10" stroke="#444" /></symbol>
      <symbol id="check" viewBox="0 0 16 16"><path d="M1 9l5 5 9-12" fill="none" stroke="#2ecc4e" stroke-width="2.200" /></symbol>
      <symbol id="camera" viewBox="0 0 18 18"><path d="M1 15L6 3l11-2-4 12z" fill="#fff2e2" stroke="#ef7f1a" stroke-width="1.200" /><circle cx="9" cy="8" r="3" fill="#888" stroke="#444" /><path d="M11 7l4-2v6" fill="#888" /></symbol>
      <symbol id="ball" viewBox="0 0 16 16"><circle cx="8" cy="8" r="7.500" fill="url(#gb)" stroke="#1a7a20" stroke-width=".6" /></symbol>
      <symbol id="hist" viewBox="0 0 18 18"><path d="M1 1h15v15H1z" fill="#f2f2f2" stroke="#666" /><path d="M3 4h6v4H3z" fill="#fff" stroke="#888" /><rect x="7" y="7" width="7" height="7" fill="#ef7f1a" stroke="#a55a10" stroke-width=".6" /></symbol>
      <symbol id="eye" viewBox="0 0 18 18"><path d="M1 9c4-6 12-6 16 0-4 6-12 6-16 0z" fill="#fff" stroke="#444" /><circle cx="9" cy="9" r="4" fill="#555" /></symbol>
      <symbol id="nodes" viewBox="0 0 16 16"><path d="M4 1h4v3H4zM4 12h4v3H4z" fill="#fff" stroke="#555" /><path d="M7 6h6v4H7z" fill="#ef7f1a" stroke="#8a4a10" stroke-width=".5" /><path d="M4 4v8" stroke="#555" stroke-dasharray="1 1" /></symbol>
      <symbol id="maxim" viewBox="0 0 16 14"><path d="M1 1.500h14V13H1z" fill="#fff" stroke="#111" /><path d="M1 1.500h14" stroke="#111" stroke-width="2" /></symbol>
      <symbol id="partTab" viewBox="0 0 20 18"><path d="M2 15l6-12 4 2-3 5 9 3-5 3z" fill="#cfd8dc" stroke="#fff" stroke-width=".6" /><circle cx="9" cy="13" r="2.500" fill="#607d8b" /></symbol>
      <symbol id="tabDoc" viewBox="0 0 12 12"><path d="M2 1h6l2 2v8H2z" fill="none" stroke="#fff" stroke-width="1.500" /><path d="M5 5h5M5 8h5" stroke="#fff" /></symbol>
      <symbol id="glass" viewBox="0 0 20 22"><circle cx="12" cy="8" r="6.500" fill="#fff" stroke="#333" stroke-width="1.200" /><path d="M8 13l-6 7" stroke="#333" stroke-width="2.200" /></symbol>
      <symbol id="gapfs" viewBox="0 0 18 18"><path d="M1 5V1h4M13 1h4v4M17 13v4h-4M5 17H1v-4" fill="none" stroke="#fff" stroke-width="1.200" /></symbol>
    </svg>

    <div class="gap-top"></div>
    <header class="header">
      <div class="titlebar">
        <div class="nx">NX</div>
        <div class="qat">
          <template v-for="(q, n) in qat" :key="n">
            <span v-if="q.sep" class="qsep" :style="q.style"></span>
            <span v-else-if="q.caret" class="caret white" :style="{ marginLeft: q.style.marginLeft }"></span>
            <span v-else-if="q.label" class="qlabel" :style="q.style">{{ q.label }}</span>
            <svg v-else class="qicon" :class="{ faint: q.faint }" :style="q.style"><use :href="'#' + q.i" /></svg>
          </template>
        </div>
        <div class="apptitle">NX - 建模</div>
        <div class="siemens">SIEMENS</div>
        <div class="winbtns">
          <span class="wmin"></span>
          <svg class="wrest" viewBox="0 0 12 12"><path d="M3.500 3V.7h7.800v7.800H9M.7 3.500h8v7.800h-8z" fill="none" stroke="#fff" stroke-width="1.300" /></svg>
          <svg class="wclose" viewBox="0 0 12 12"><path d="M1 1l10 10M11 1L1 11" stroke="#fff" stroke-width="1.600" /></svg>
        </div>
      </div>
      <div class="menubar">
        <span class="m-file">文件(F)</span>
        <span class="m-home">主页</span>
        <span v-for="m in menus" :key="m" class="m-item">{{ m }}</span>
        <div class="searchbox">
          <span>在此输入以搜索</span>
          <svg class="glass"><use href="#glass" /></svg>
        </div>
        <svg class="fs"><use href="#gapfs" /></svg>
        <svg class="chev" viewBox="0 0 16 10"><path d="M1 9l7-7 7 7" fill="none" stroke="#fff" stroke-width="1.200" /></svg>
        <span class="help">?</span>
        <span class="bang">!</span>
      </div>
    </header>

    <section class="ribbon">
      <div class="grp g-build shift">
        <div class="body">
          <div class="plane-btn">
            <div class="plane-top"><svg class="plane-ic"><use href="#plane" /></svg></div>
            <div class="plane-bot"><span>基准平面</span><i class="caret"></i></div>
          </div>
          <div class="bigbtn w40">
            <svg class="big"><use href="#sketch" /></svg><span>草图</span>
          </div>
        </div>
        <div class="foot"><span class="cap">构造</span><i class="caret"></i></div>
      </div>

      <div class="grp g-basic shift">
        <div class="body">
          <div v-for="b in basicBtns" :key="b.t" class="bigbtn" :style="{ width: b.w + 'px' }">
            <svg class="big"><use :href="'#' + b.i" /></svg><span>{{ b.t }}</span><i v-if="b.caret" class="caret"></i>
          </div>
          <div class="stack s1">
            <div class="pair"><svg class="mid"><use href="#draft" /></svg>拔模</div>
            <div class="pair"><svg class="mid"><use href="#shell" /></svg>抽壳</div>
          </div>
          <div class="stack s2">
            <div class="pair"><svg class="mid"><use href="#pattern" /></svg>阵列特征</div>
            <div class="pair"><svg class="mid"><use href="#mirror" /></svg>镜像特征</div>
          </div>
          <div class="bigbtn w48">
            <svg class="big"><use href="#more1" /></svg><span>更多</span><i class="caret"></i>
          </div>
        </div>
        <div class="foot"><span class="cap">基本</span><i class="caret"></i></div>
      </div>

      <div class="grp g-sync shift">
        <div class="body">
          <div v-for="b in syncBtns" :key="b.t" class="bigbtn" :style="{ width: b.w + 'px' }">
            <svg class="big"><use :href="'#' + b.i" /></svg><span>{{ b.t }}</span>
          </div>
          <div class="stack s3">
            <div class="pair"><svg class="mid"><use href="#offset" /></svg>偏置</div>
            <div class="pair"><svg class="mid"><use href="#resize" /></svg>调整圆角大小</div>
          </div>
          <div class="bigbtn w48">
            <svg class="big"><use href="#rotate" /></svg><span>更多</span><i class="caret"></i>
          </div>
        </div>
        <div class="foot"><span class="cap">同步建模</span><i class="caret"></i></div>
      </div>

      <div v-for="g in small" :key="g.name" class="grp" :style="{ width: g.w + 'px' }">
        <div class="body col" :style="{ paddingLeft: g.pad + 'px' }">
          <div v-for="(row, n) in g.rows" :key="n" class="irow">
            <template v-for="(ic, k) in row" :key="k">
              <span v-if="ic === '|'" class="isep"></span>
              <span v-else-if="textIcons[ic]" class="ic">
                <svg viewBox="0 0 24 24">
                  <use v-if="textIcons[ic].base" :href="'#' + textIcons[ic].base" width="24" height="24" />
                  <text
                    v-for="l in textIcons[ic].lines"
                    :key="l.t + l.y"
                    class="tx"
                    text-anchor="middle"
                    :x="l.x ?? 12"
                    :y="l.y"
                    :font-size="l.size"
                    :font-weight="l.bold ? 700 : 400"
                    :fill="l.fill"
                    :textLength="l.len"
                    :lengthAdjust="l.len ? 'spacingAndGlyphs' : undefined"
                    :transform="l.rot"
                  >{{ l.t }}</text>
                </svg>
              </span>
              <span v-else class="ic"><svg><use :href="'#' + ic" /></svg></span>
            </template>
          </div>
        </div>
        <div class="foot"><span class="cap">{{ g.cap }}</span><i class="caret"></i></div>
      </div>
      <i class="caret ribbon-end"></i>
    </section>

    <section class="quickbar">
      <span class="burger"></span>
      <span class="menu-lbl">菜单(<u>M</u>)</span>
      <i class="caret qc"></i>
      <span class="qb-sep"></span>
      <div class="select s-filter"><span>无选择过滤器</span><i class="caret"></i></div>
      <svg v-for="q in quick" :key="q.i" class="qb-ic" :style="q.style"><use :href="'#' + q.i" /></svg>
      <div class="select s-scope"><span>整个装配</span><i class="caret"></i></div>
      <template v-for="(q, n) in quick2" :key="n">
        <span v-if="q.sep" class="qb-sep2" :style="{ marginLeft: q.style.marginLeft }"></span>
        <i v-else-if="q.caret" class="caret" :style="{ marginLeft: q.style.marginLeft }"></i>
        <span v-else class="qb-cell" :class="{ on: q.active, faint: q.faint }" :style="q.style"><svg><use :href="'#' + q.i" /></svg></span>
      </template>
      <i class="caret qb-end"></i>
    </section>

    <main class="main">
      <div class="edge"></div>
      <nav class="sidebar">
        <div v-for="s in sideStyled" :key="s.i" class="side-ic" :class="{ active: s.i === 'partnav', small: s.s }" :style="s.style">
          <svg><use :href="'#' + s.i" /></svg>
        </div>
      </nav>

      <aside class="navpanel">
        <div class="nav-title"><span>部件导航器</span><svg class="maxim"><use href="#maxim" /></svg></div>
        <div class="table">
          <div class="thead">
            <div class="th th-name">名称<i class="sort"></i></div>
            <div class="th">当.</div>
            <div class="th">最.</div>
            <div class="th">附注</div>
          </div>
          <div class="tree">
            <div v-for="r in treeRows" :key="r.key" class="tr">
              <div class="td-name" :class="{ bold: r.bold }">
                <svg v-for="(c, n) in r.cells" :key="n" class="t-ic" :style="c.style"><use :href="'#' + c.i" /></svg>
                <span v-if="r.t" :style="{ marginLeft: r.tm + 'px' }">{{ r.t }}</span>
              </div>
              <div class="td"><svg v-if="r.cur" class="nodes"><use href="#nodes" /></svg></div>
              <div class="td"><svg v-if="r.ok" class="okmark"><use href="#check" /></svg></div>
              <div class="td last"></div>
            </div>
            <i class="dots v1"></i><i class="dots h1"></i><i class="dots v2"></i><i class="dots h2"></i><i class="dots h3"></i>
          </div>
          <div class="hscroll">
            <svg viewBox="0 0 8 12" class="arr"><path d="M7 1L2 6l5 5" fill="none" stroke="#333" stroke-width="1.600" /></svg>
            <div class="thumb"></div>
            <svg viewBox="0 0 8 12" class="arr"><path d="M1 1l5 5-5 5" fill="none" stroke="#333" stroke-width="1.600" /></svg>
          </div>
        </div>
        <div v-for="s in sections" :key="s" class="acc"><i class="acc-tri"></i>{{ s }}</div>
      </aside>

      <div class="workspace">
        <div class="tabstrip">
          <div class="tab">
            <svg class="tab-part"><use href="#partTab" /></svg>
            <span>_model4.prt</span>
            <svg class="tab-doc"><use href="#tabDoc" /></svg>
            <svg class="tab-x" viewBox="0 0 10 10"><path d="M1 1l8 8M9 1L1 9" stroke="#fff" stroke-width="2" /></svg>
          </div>
        </div>
        <div class="canvas">
          <svg class="scene" viewBox="425 240 1469 777">
            <polygon points="721,382 1451,478 1348,742 618,649" fill="#ffa900" stroke="#4a3000" stroke-width="1" />
            <polygon points="1451,478 1458,539 1354,804 1348,742" fill="#d98000" stroke="#4a3000" stroke-width="1" />
            <polygon points="618,649 1348,742 1354,804 625,710" fill="#a96800" stroke="#4a3000" stroke-width="1" />
            <!-- datum csys -->
            <g fill="none" stroke="#f7dca8" stroke-width="1.200">
              <path d="M619 659L637 613L642 662L707 671L689 716" />
              <path d="M624 709L660 628" />
            </g>
            <g fill="none" stroke="#4a32d8" stroke-width="1.200">
              <path d="M619 659L684 668L689 716" stroke-dasharray="5 1" />
              <path d="M624 709L614 625M624 709L740 724" />
              <path d="M618 709h15M624.500 702v14" stroke="#1a14e0" stroke-width="2" />
            </g>
            <path d="M614 612l-3 13h6z" fill="#14148c" />
            <path d="M661 618l-8 11 5 3z" fill="#fff" />
            <circle cx="656" cy="628" r="3" fill="#7a7a7a" />
            <path d="M737 721l15 3-15 3z" fill="#14148c" />
            <text x="608" y="612" class="wcs z">Z</text>
            <text x="659" y="617" class="wcs y">Y</text>
            <text x="755" y="731" class="wcs z">X</text>
            <!-- view triad -->
            <g fill="none" stroke="#ababab" stroke-width="1">
              <path d="M513 879L553 884L543 911L503 907zM503 907L506 937L544 942L543 911M553 884L556 912L544 942" />
            </g>
            <path d="M527 896L525 870" stroke="#0a2ab0" stroke-width="5" stroke-linecap="round" />
            <path d="M522 860l-6 13h11z" fill="#0a2ab0" />
            <path d="M540 882L544 872" stroke="#3aa83a" stroke-width="5" />
            <path d="M549 861l-9 11 9 4z" fill="#3aa83a" />
            <path d="M549 913L580 917" stroke="#d02a2a" stroke-width="5" stroke-linecap="round" />
            <path d="M597 919l-18-7 -1 10z" fill="#d02a2a" />
            <text x="518" y="858" class="tri" fill="#3b52c8">Z</text>
            <text x="546" y="860" class="tri" fill="#3c9a3c">Y</text>
            <text x="602" y="925" class="tri" fill="#d03a3a">X</text>
          </svg>
        </div>
      </div>

      <nav class="righttools">
        <div v-for="(r, n) in rightStyled" :key="n" class="r-ic" :style="r.style"><svg><use :href="'#' + r.i" /></svg></div>
        <div class="r-line"></div>
        <i class="caret r-end"></i>
      </nav>
    </main>

    <footer class="status">选择对象并使用 MB3，或者双击某一对象</footer>
  </div>
</template>

<style>
html, body { margin: 0; background: #000; }
.tx, .wcs, .tri { font-family: "Liberation Sans", Arial, sans-serif; }
</style>

<style scoped>
.app {
  width: 1920px;
  height: 1030px;
  overflow: hidden;
  display: flex;
  flex-direction: column;
  background: #000;
  color: #333;
  font-family: "Open Sans", "Noto Sans CJK SC", sans-serif;
  font-size: 14px;
  position: relative;
}
.sheet { position: absolute; width: 0; height: 0; }
.gap-top { height: 9px; flex: none; }
.header { flex: none; height: 62px; background: linear-gradient(90deg, #005d83 0%, #006d92 50%, #0078a6 100%); color: #fff; }
.caret { display: inline-block; width: 0; height: 0; border-left: 4px solid transparent; border-right: 4px solid transparent; border-top: 5px solid #222; flex: none; }
.caret.white { border-top-color: #fff; }

.titlebar { height: 31px; display: flex; align-items: center; margin-top: 0; }
.nx { margin-left: 13px; width: 35px; font: 700 25.500px/31px "Liberation Sans", Arial, sans-serif; }
.qat { display: flex; align-items: center; width: 422px; flex: none; }
.qicon { height: 20px; color: #fff; flex: none; }
.faint { opacity: .35; }
.qsep { height: 22px; background: #2d86a8; flex: none; }
.qlabel { font-size: 14px; flex: none; margin-top: -2px; }
.apptitle { margin-left: 610px; width: 669px; font-size: 15px; flex: none; margin-top: -2px; }
.siemens { font: 700 15.500px "Liberation Sans", Arial, sans-serif; flex: none; width: 69px; margin-top: -1px; }
.winbtns { display: flex; align-items: center; margin-left: 31px; }
.wmin { width: 8px; height: 2px; background: #fff; margin-top: 8px; }
.wrest { width: 12px; height: 12px; margin-left: 20px; }
.wclose { width: 12px; height: 12px; margin-left: 17px; }

.menubar { height: 31px; display: flex; align-items: center; font-size: 16px; position: relative; }
.menubar > span { margin-top: -2px; }
.m-file { margin-left: 29px; width: 76px; flex: none; }
.menubar > .m-home { width: 64px; text-align: center; color: #e6e8a8; height: 27px; line-height: 25px; border-bottom: 2px solid #d6da96; margin-top: 1px; flex: none; box-sizing: content-box; margin-right: 16px; }
.m-item { width: 64px; flex: none; }
.searchbox { margin-left: 838px; width: 219px; height: 26px; background: #fff; border: 1px solid #9ab; box-sizing: border-box; display: flex; align-items: center; justify-content: space-between; color: #aaa; font-size: 14px; flex: none; }
.glass { width: 20px; height: 22px; margin-right: 4px; }
.fs { width: 18px; height: 18px; margin-left: 9px; flex: none; }
.chev { width: 16px; height: 10px; margin-left: 9px; flex: none; }
.menubar > .help { width: 15px; height: 15px; border: 1.200px solid #fff; border-radius: 50%; text-align: center; font-size: 11px; line-height: 15px; margin-left: 9px; margin-top: 0; flex: none; }
.menubar > .bang { margin-left: 13px; font-size: 18px; flex: none; }

.ribbon { flex: none; height: 107px; box-sizing: border-box; background: #fff; border-bottom: 1px solid #d8d8d8; display: flex; align-items: flex-start; position: relative; }
.grp { height: 98px; margin-top: 5px; border-right: 1px solid #dcdcdc; box-sizing: border-box; display: flex; flex-direction: column; flex: none; }
.body { height: 80px; display: flex; flex: none; }
.body.col { flex-direction: column; }
.foot { height: 18px; display: flex; align-items: center; padding-right: 8px; }
.cap { flex: 1; text-align: center; color: #1b7493; line-height: 24px; margin-top: 6px; white-space: nowrap; overflow: hidden; }
.shift .cap { padding-right: 10px; }
.foot .caret { margin-top: -4px; margin-left: 4px; }
.g-build { width: 130px; padding-left: 19px; }
.g-basic { width: 573px; padding-left: 6px; }
.g-sync { width: 301px; padding-left: 8px; }
.plane-btn { width: 63px; height: 82px; margin-top: -2px; flex: none; display: flex; flex-direction: column; }
.plane-top { height: 37px; background: #add6e6; display: flex; align-items: center; justify-content: center; }
.plane-ic { width: 36px; height: 24px; margin-top: -2px; }
.plane-bot { margin-top: 1px; flex: 1; background: #add6e6; display: flex; flex-direction: column; align-items: center; padding-top: 1px; }
.plane-bot span { line-height: 20px; white-space: nowrap; }
.plane-bot .caret { margin-top: 4px; }
.bigbtn { flex: none; display: flex; flex-direction: column; align-items: center; }
.w40 { width: 40px; }
.w48 { width: 48px; }
.big { width: 36px; height: 36px; flex: none; }
.bigbtn span { line-height: 20px; margin-top: 2px; white-space: nowrap; }
.bigbtn .caret { margin-top: 4px; }
.stack { flex: none; }
.s1 { width: 64px; margin-left: 6px; }
.s2 { width: 91px; }
.s3 { width: 120px; margin-left: 5px; }
.pair { height: 38px; display: flex; align-items: center; gap: 4px; white-space: nowrap; }
.mid { width: 24px; height: 24px; flex: none; }
.irow { height: 32px; display: flex; align-items: center; }
.ic { width: 23px; height: 24px; flex: none; display: flex; align-items: center; justify-content: center; }
.ic svg { width: 22px; height: 22px; }
.isep { width: 6px; height: 24px; flex: none; position: relative; }
.isep::after { content: ""; position: absolute; left: 3px; top: 0; bottom: 0; width: 1px; background: #d8d8d8; }
.ribbon-end { margin-top: 92px; margin-left: 218px; }

.quickbar { flex: none; height: 32px; box-sizing: border-box; background: #fff; border-bottom: 1px solid #b8b8b8; padding-top: 3px; display: flex; align-items: center; }
.burger { width: 10px; height: 9px; margin-left: 21px; border-top: 1px solid #333; border-bottom: 1px solid #333; box-sizing: border-box; position: relative; flex: none; }
.burger::after { content: ""; position: absolute; left: 0; right: 0; top: 3px; height: 1px; background: #333; }
.menu-lbl { margin-left: 8px; width: 56px; flex: none; }
.qc { margin-left: -1px; }
.qb-sep { width: 1px; height: 24px; background: #ddd; margin-left: 8px; flex: none; }
.select { height: 26px; box-sizing: border-box; border: 1px solid #8e8e8e; display: flex; align-items: center; justify-content: space-between; padding: 0 7px 0 2px; flex: none; }
.s-filter { width: 183px; margin-left: 13px; }
.s-scope { width: 191px; margin-left: 8px; }
.qb-ic { height: 20px; flex: none; }
.qb-cell { height: 24px; display: flex; align-items: center; justify-content: center; flex: none; }
.qb-cell svg { width: 20px; height: 20px; }
.qb-cell.on { background: #cfe4ec; }
.qb-sep2 { width: 1px; height: 24px; background: #ddd; flex: none; }
.qb-end { margin-left: 1141px; }

.main { flex: none; height: 807px; display: flex; }
.edge { width: 9px; background: #000; flex: none; }
.sidebar { width: 32px; box-sizing: border-box; background: #d8d8d8; border-right: 1px solid #a8a8a8; flex: none; display: flex; flex-direction: column; align-items: stretch; }
.side-ic { height: 28px; display: flex; align-items: center; justify-content: center; padding-left: 6px; flex: none; }
.side-ic svg { width: 26px; height: 26px; }
.side-ic.small { justify-content: flex-start; padding-left: 7px; }
.side-ic.small svg { width: 16px; height: 16px; }
.side-ic.active { background: #fff; box-shadow: 0 -9px 0 #fff, 0 9px 0 #fff; margin-right: -1px; margin-left: 2px; padding-left: 4px; position: relative; }

.navpanel { width: 383px; flex: none; box-sizing: border-box; background: #fff; padding: 0 9px 0 6px; }
.nav-title { height: 32px; display: flex; align-items: center; justify-content: space-between; font-size: 15px; padding: 0 6px 0 4px; }
.maxim { width: 16px; height: 14px; }
.table { height: 654px; margin-bottom: 2px; box-sizing: border-box; border: 1px solid #d4d4d4; border-bottom: 3px solid #b4b4b4; padding: 0 1px; }
.thead { height: 24px; display: grid; grid-template-columns: 250px 30px 30px 1fr; background: #f3f3f3; font-size: 15px; align-items: center; }
.th { padding-left: 5px; line-height: 24px; height: 24px; border-left: 1px solid #e4e4e4; white-space: nowrap; box-sizing: border-box; }
.th-name { padding-left: 6px; border-left: 0; display: flex; align-items: center; }
.sort { width: 0; height: 0; border-left: 6px solid transparent; border-right: 6px solid transparent; border-bottom: 6px solid #111; margin-left: 18px; }
.tree { position: relative; height: 600px; }
.tr { height: 24px; box-sizing: border-box; border-bottom: 1px solid #ececec; display: grid; grid-template-columns: 250px 30px 30px 1fr; font-size: 15px; }
.tr:nth-child(even) { background: #f9f9f9; }
.td-name { display: flex; align-items: center; white-space: nowrap; padding-top: 2px; }
.td-name.bold { font-weight: 700; }
.td { border-left: 1px solid #ececec; display: flex; align-items: center; justify-content: center; padding-top: 1px; }
.td-name span { line-height: 23px; }
.t-ic { height: 16px; flex: none; }
.nodes { width: 14px; height: 14px; margin-left: -8px; }
.okmark { width: 16px; height: 16px; margin-right: 9px; }
.dots { position: absolute; display: block; }
.v1 { left: 9px; top: 13px; height: 60px; border-left: 1px dotted #888; }
.h1 { left: 9px; top: 13px; width: 9px; border-top: 1px dotted #888; }
.v2 { left: 27px; top: 93px; height: 40px; border-left: 1px dotted #888; }
.h2 { left: 27px; top: 109px; width: 10px; border-top: 1px dotted #888; }
.h3 { left: 27px; top: 133px; width: 10px; border-top: 1px dotted #888; }
.hscroll { margin-top: 3px; height: 21px; background: #f1f1f1; display: flex; align-items: center; }
.arr { width: 8px; height: 12px; margin: 0 7px 0 6px; flex: none; }
.thumb { width: 269px; height: 21px; background: #cdcdcd; margin-right: 53px; flex: none; }
.acc { height: 28px; box-sizing: border-box; padding-top: 1px; border-bottom: 2px solid #cfcfcf; display: flex; align-items: center; font-size: 18px; color: #1f6e8c; }
.acc-tri { width: 0; height: 0; border-top: 5px solid transparent; border-bottom: 5px solid transparent; border-left: 6px solid #0c6485; margin: 0 10px 0 12px; }

.workspace { flex: 1; min-width: 0; display: flex; flex-direction: column; border-left: 1px solid #a8a8a8; box-sizing: border-box; }
.tabstrip { height: 30px; flex: none; background: #fff; border-bottom: 2px solid #0b6a8c; box-sizing: border-box; display: flex; align-items: flex-end; padding-top: 1px; margin-left: -1px; }
.tab { width: 154px; height: 27px; background: #006b91; color: #fff; display: flex; align-items: center; font-size: 15px; box-sizing: border-box; padding-left: 5px; }
.tab-part { width: 20px; height: 18px; flex: none; }
.tab span { margin-left: 7px; white-space: nowrap; }
.tab-doc { width: 12px; height: 12px; margin-left: 5px; flex: none; }
.tab-x { width: 10px; height: 10px; margin-left: 6px; flex: none; }
.canvas { flex: 1; background: #d3d3d3; position: relative; overflow: hidden; }
.scene { position: absolute; inset: 0; width: 100%; height: 100%; }
.wcs { font-size: 12px; }
.wcs.z { fill: #2a22d8; }
.wcs.y { fill: #f4dcae; }
.tri { font-size: 13px; }

.righttools { width: 26px; flex: none; background: #fff; display: flex; flex-direction: column; position: relative; }
.r-ic { height: 24px; flex: none; padding-left: 5px; }
.r-ic svg { width: 24px; height: 24px; }
.r-line { height: 1px; background: #e4e4e4; margin-top: 22px; }
.r-end { transform: rotate(90deg); position: absolute; left: 9px; bottom: 10px; }

.status { flex: none; height: 13px; overflow: hidden; background: #fff; border-top: 1px solid #a8a8a8; box-sizing: border-box; padding-left: 12px; color: #111; font-weight: 700; font-size: 14px; line-height: 21px; white-space: nowrap; }
</style>
